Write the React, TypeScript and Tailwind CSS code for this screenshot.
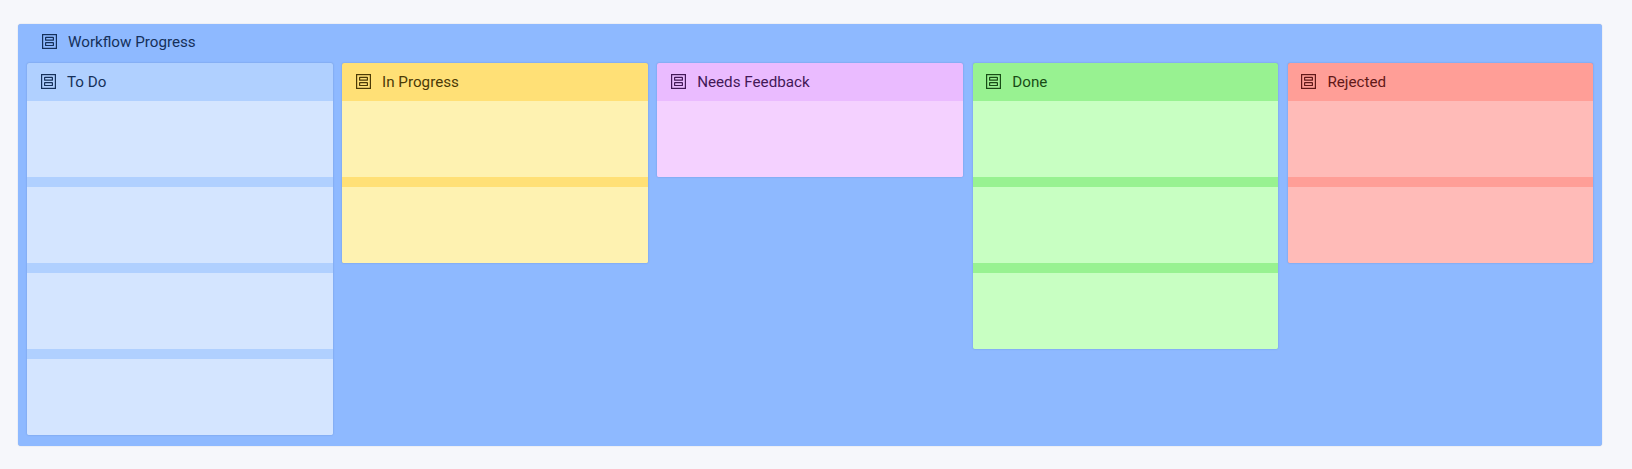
import React from 'react';
import clsx from 'clsx';

type Column = {
  title: string;
  cards: number;
  frame: string;
  text: string;
  card: string;
};

const columns: Column[] = [
  { title: 'To Do', cards: 4, frame: 'bg-[#b0d0ff]', text: 'text-[#15305a]', card: 'bg-[#d4e5ff]' },
  { title: 'In Progress', cards: 2, frame: 'bg-[#ffe076]', text: 'text-[#4b3a06]', card: 'bg-[#fef2b1]' },
  { title: 'Needs Feedback', cards: 1, frame: 'bg-[#eabbff]', text: 'text-[#421857]', card: 'bg-[#f4d1ff]' },
  { title: 'Done', cards: 3, frame: 'bg-[#98f291]', text: 'text-[#184c16]', card: 'bg-[#c8ffc2]' },
  { title: 'Rejected', cards: 2, frame: 'bg-[#ff9e97]', text: 'text-[#611818]', card: 'bg-[#ffbbb8]' },
];

function ContainerIcon() {
  return (
    <svg className="h-[15px] w-[15px] shrink-0" viewBox="0 0 15 15" fill="none" stroke="currentColor" strokeWidth="1.2">
      <rect x="0.6" y="0.6" width="13.8" height="13.8" />
      <rect x="3.6" y="3.4" width="7.8" height="2.8" rx="0.3" />
      <rect x="3.6" y="8.7" width="7.8" height="2.8" rx="0.3" />
    </svg>
  );
}

function BoardColumn({ column }: { column: Column }) {
  return (
    <section className={clsx('overflow-hidden rounded-[2px] shadow-[0_0_1.5px_rgba(30,60,120,0.4)]', column.frame)}>
      <header className={clsx('flex h-[38px] items-center gap-[11px] pb-px pl-[13.7px]', column.text)}>
        <ContainerIcon />
        <h2 className="pt-px">{column.title}</h2>
      </header>
      <div className="flex flex-col gap-2.5">
        {Array.from({ length: column.cards }, (_, i) => (
          <div key={i} className={clsx('h-[76px]', column.card)} />
        ))}
      </div>
    </section>
  );
}

export default function App() {
  return (
    <main className="h-[469px] bg-[#f6f7fb] pt-6 pl-[18px] font-['Roboto',sans-serif] text-[15.2px]">
      <div className="h-[422px] w-[1584px] rounded-[3px] bg-[#8eb9ff] pr-[9px] pl-[9.3px] shadow-[0_0_1px_rgba(30,60,120,0.4)]">
        <header className="flex h-[39px] items-center gap-[11px] pb-1 pl-[14.7px] text-[#15305a]">
          <ContainerIcon />
          <h1 className="pt-px">Workflow Progress</h1>
        </header>
        <div className="grid grid-cols-5 items-start gap-x-[9.8px]">
          {columns.map((column) => (
            <BoardColumn key={column.title} column={column} />
          ))}
        </div>
      </div>
    </main>
  );
}
